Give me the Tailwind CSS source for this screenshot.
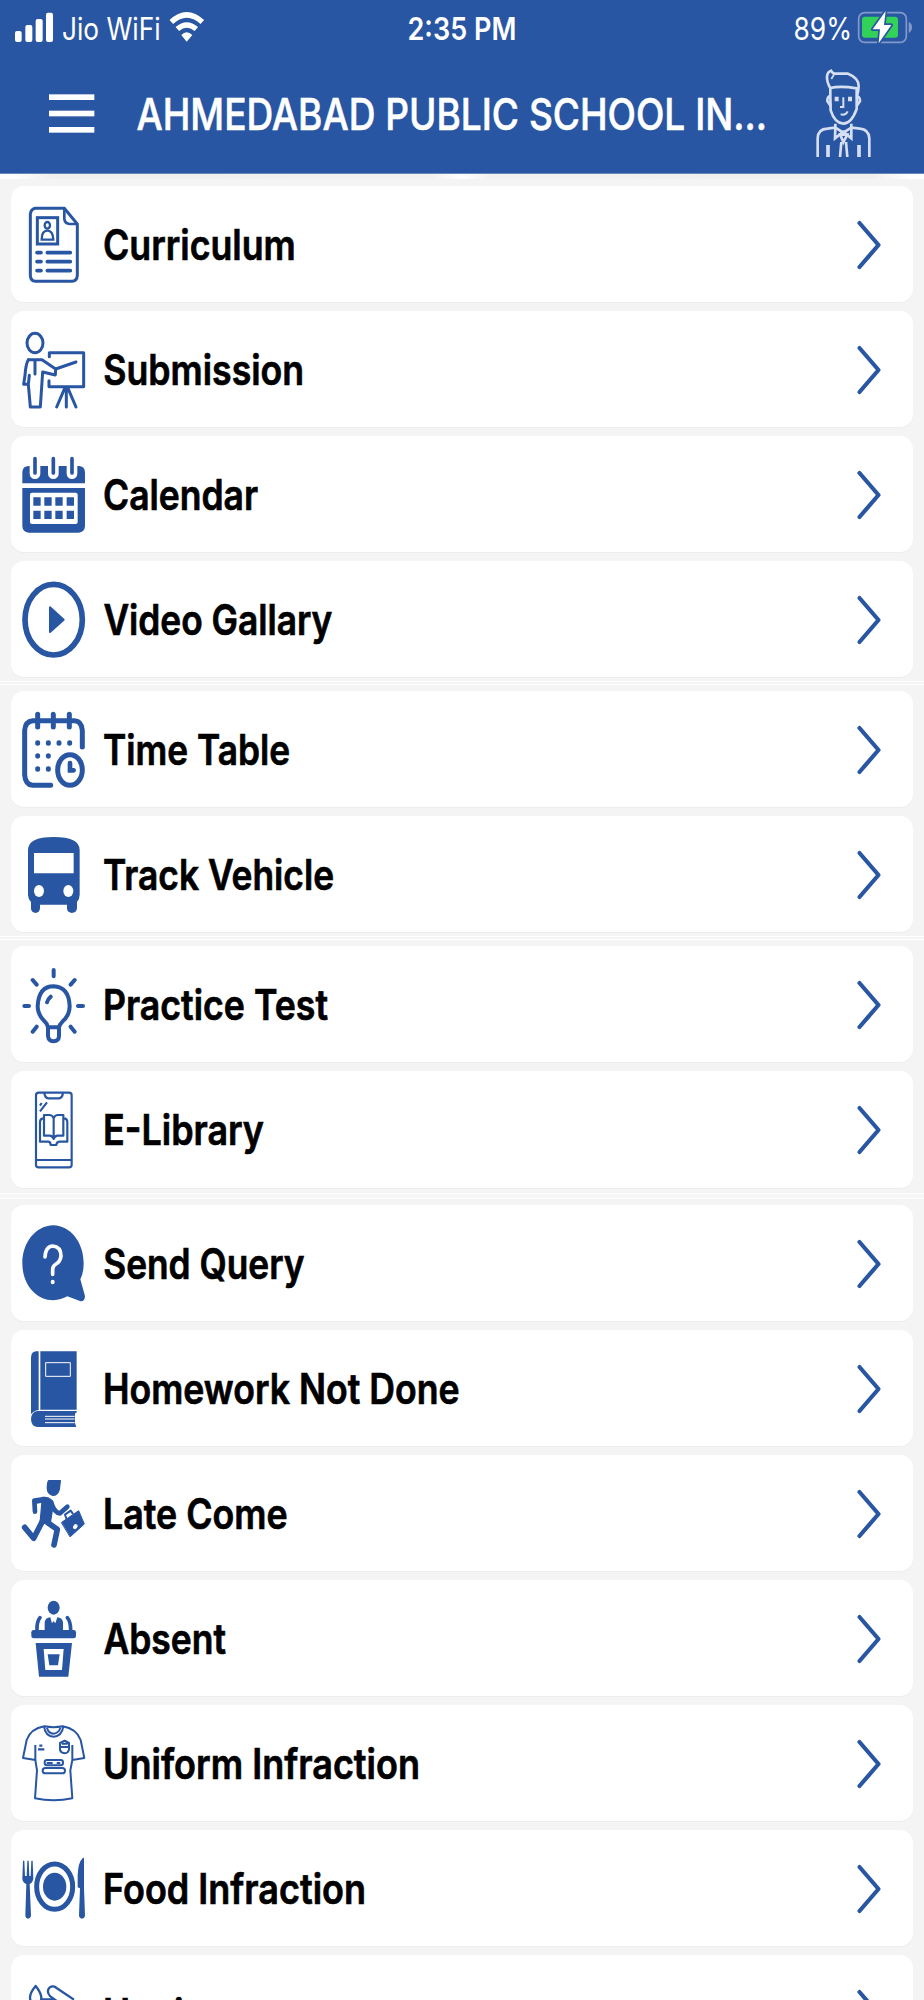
<!DOCTYPE html>
<html lang="en">
<head>
<meta charset="utf-8">
<title>Ahmedabad Public School</title>
<script src="https://cdn.jsdelivr.net/npm/@tailwindcss/browser@4"></script>
</head>
<body class="bg-[#f4f4f4]">
<div class="w-[924px] h-[2000px] overflow-hidden bg-[#f4f4f4] font-['Inter','Liberation_Sans',sans-serif] text-black">

<header class="h-[174px] bg-[#2956a3] text-white border-b border-[#6b87b5]">
  <div class="h-[58px] flex items-start">
    <svg class="ml-[14px] mt-[12px] w-[40px] h-[30px] shrink-0" viewBox="42 36 120 90" fill="#fff">
      <rect x="45" y="93" width="20" height="33" rx="6"/><rect x="76" y="75" width="21" height="51" rx="6"/><rect x="107" y="57" width="21" height="69" rx="6"/><rect x="138" y="38" width="21" height="88" rx="6"/>
    </svg>
    <svg class="overflow-visible ml-[6px] mt-[9px] w-[104px] h-[40px] shrink-0 text-[31px]" fill="currentColor"><text x="2" y="31" textLength="98.500" lengthAdjust="spacingAndGlyphs">Jio WiFi</text></svg>
    <svg class="ml-[5px] mt-[11px] w-[36px] h-[32px] shrink-0" viewBox="507 33 108 96" fill="none" stroke="#fff">
      <path d="M514 66Q560 23 607 66" stroke-width="16"/><path d="M532 87Q560 63 589 87" stroke-width="16"/><path d="M560 125L544 105Q560 89 577 105Z" fill="#fff" stroke="none"/>
    </svg>
    <svg class="overflow-visible ml-[201px] mt-[9px] w-[114px] h-[40px] shrink-0 text-[31px] font-semibold" fill="currentColor"><text x="1.500" y="31" textLength="109" lengthAdjust="spacingAndGlyphs">2:35 PM</text></svg>
    <svg class="overflow-visible ml-[271px] mt-[9px] w-[62px] h-[40px] shrink-0 text-[31px]" fill="currentColor"><text x="2.500" y="31" textLength="58.500" lengthAdjust="spacingAndGlyphs">89%</text></svg>
    <svg class="ml-[4px] mt-[10px] w-[56px] h-[34px] shrink-0" viewBox="1185 30 168 102">
      <rect x="1190" y="38" width="143" height="89" rx="18" fill="none" stroke="#8299c9" stroke-width="5"/>
      <path d="M1340 66Q1350 70 1350 82Q1350 94 1340 99Z" fill="#8299c9"/>
      <rect x="1200" y="50" width="108" height="63" rx="9" fill="#32d158"/>
      <path d="M1271 33L1232 88H1254L1250 130L1288 75H1266Z" fill="#fff" stroke="#2956a3" stroke-width="10" stroke-linejoin="round" paint-order="stroke"/>
    </svg>
  </div>
  <div class="h-[115px] flex items-start">
    <svg class="ml-[47px] mt-[34px] w-[50px] h-[43px] shrink-0" viewBox="141 276 150 129" fill="#fff">
      <rect x="147" y="283" width="136" height="17"/><rect x="147" y="332" width="136" height="17"/><rect x="147" y="381" width="136" height="17"/>
    </svg>
    <svg class="overflow-visible ml-[38px] mt-[30px] w-[640px] h-[54px] shrink-0 text-[44px] font-medium" fill="currentColor"><text x="1.500" y="42.400" textLength="630.500" lengthAdjust="spacingAndGlyphs" stroke="currentColor" stroke-width=".6">AHMEDABAD PUBLIC SCHOOL IN...</text></svg>
    <svg class="ml-[37px] mt-[9px] w-[60px] h-[92px] shrink-0" viewBox="1050 200 180 276" fill="none" stroke="#d5def2" stroke-width="8">
      <path d="M1105 263Q1094 245 1095 228Q1097 214 1107 211Q1111 218 1117 220H1158Q1191 233 1190 258Q1189 274 1185 286"/>
      <path d="M1117 221L1108 236" stroke-width="5"/>
      <path d="M1105 287V263Q1135 256 1184 264V326Q1168 370 1144 370Q1118 368 1106 330Z"/>
      <path d="M1105 287Q1096 288 1096 302L1106 317M1185 287Q1194 290 1194 302L1184 317"/>
      <path d="M1118 296H1130M1158 296H1170" stroke-width="14"/>
      <path d="M1144 291V320H1134M1136 342Q1151 346 1157 333" stroke-width="6"/>
      <path d="M1067 470V414Q1068 386 1096 385L1120 382V370M1222 470V414Q1220 387 1194 385L1168 382V370M1120 382L1119 414L1144 394L1168 414V382"/>
      <path d="M1135 403L1144 426L1156 403ZM1120 382L1144 397L1168 382"/>
      <path d="M1138 425L1134 470M1152 425L1156 470"/>
      <path d="M1098 434V470M1191 434V470" stroke-width="11"/>
    </svg>
  </div>
</header>
<div class="h-[5px] flex">
  <i class="block grow h-full bg-linear-to-r from-white from-3% via-[#efefef] via-12% to-[#f1f1f1]"></i>
  <i class="block w-[60px] h-full bg-linear-to-r from-[#f1f1f1] via-white to-[#f1f1f1]"></i>
  <i class="block grow h-full bg-linear-to-l from-white from-3% via-[#efefef] via-12% to-[#f1f1f1]"></i>
</div>

<main id="menu" class="pt-[6.5px] flex flex-col text-[#2956a3]"></main>
</div>

<script>
// Menu entries: label, text x, text width, icon viewBox top, row pitch, icon drawing
const rows = [
['Curriculum',3,192.8,74,125,`<g fill="none" stroke="currentColor" stroke-width="9"><path d="M106 84H193L232 131V285Q231 302 216 303H106Q92 302 91 285V101Q93 86 106 84Z"/><path d="M193 84V116Q195 130 209 131H232" stroke-width="8"/><rect x="112" y="112" width="61" height="79"/><ellipse cx="142" cy="135" rx="8" ry="10" stroke-width="7"/><path d="M125 178Q125 151 142 151Q159 151 160 178Z" stroke-width="7"/><path stroke-width="11" stroke-linecap="round" d="M111 217H123M142 217H211M111 244H123M142 244H211M111 271H123M142 271H211"/></g>`],
['Submission',3.2,201,449,125,`<g fill="none" stroke="currentColor" stroke-width="9" stroke-linecap="round" stroke-linejoin="round"><ellipse cx="105" cy="488" rx="24" ry="29"/><path d="M148 529V517H251V619H147V601"/><path d="M85 538H126L167 566L228 545M167 566L166 584L128 575L121 680H91L85 612H71L75 585Q77 553 85 538M105 541V581M88 585L85 612"/><path d="M199 622V680M194 624L170 680M204 624L228 680"/></g>`],
['Calendar',3,155,824,125,`<path fill="currentColor" d="M67 909V876Q68 857 86 857H236Q254 857 255 876V909ZM67 923H255V1038Q254 1056 236 1057H86Q68 1056 67 1038Z"/><g fill="none" stroke-linecap="round"><path stroke="#fff" stroke-width="32" d="M105 850V880M160 850V880M216 850V880"/><path stroke="currentColor" stroke-width="11" d="M105 835V878M160 835V878M216 835V878"/></g><rect x="90" y="937" width="143" height="94" rx="6" fill="#fff"/><path fill="currentColor" d="M100 951h22v25h-22zM133 951h22v25h-22zM166 951h22v25h-22zM200 951h22v25h-22zM100 991h22v25h-22zM133 991h22v25h-22zM166 991h22v25h-22zM200 991h22v25h-22z"/>`],
['Video Gallary',3.4,229,59,130.3,`<ellipse cx="161" cy="178" rx="86" ry="106" fill="none" stroke="currentColor" stroke-width="17"/><path d="M150 141V215L191 178Z" fill="currentColor" stroke="currentColor" stroke-width="6" stroke-linejoin="round"/>`],
['Time Table',3,187,450,125,`<g fill="none" stroke="currentColor" stroke-width="15" stroke-linecap="round"><path d="M247 561V511Q245 483 224 482H98Q76 484 74 511V645Q76 674 98 676H152"/><path d="M113 463V501M160 463V501M208 463V501"/><ellipse cx="210" cy="630" rx="37" ry="46"/><path d="M210 609V631H221" stroke-width="14"/><path d="M113 548v2M145 548v2M177 548v2M209 548v2M113 587v2M145 587v2M113 626v2M145 626v2"/></g>`],
['Track Vehicle',3,231.1,825,130,`<path fill="currentColor" d="M84 870Q84 831 161 831Q239 831 239 870V1005Q239 1016 231 1026V1045Q230 1059 215 1059Q201 1057 201 1045V1034H120V1045Q119 1059 106 1059Q93 1057 93 1045V1026Q84 1016 84 1005Z"/><path fill="#fff" d="M102 879H221V940H102Z"/><ellipse cx="117" cy="993" rx="15" ry="18" fill="#fff"/><ellipse cx="205" cy="993" rx="15" ry="18" fill="#fff"/>`],
['Practice Test',3,225,75,125.7,`<g fill="none" stroke="currentColor" stroke-width="12" stroke-linecap="round" stroke-linejoin="round"><path d="M144 262Q142 251 133 243Q113 224 113 199Q116 139 161 139Q207 141 209 199Q208 227 188 244Q178 254 177 262V288Q177 304 160 304Q145 304 144 288ZM144 262H177"/><path stroke-width="12" d="M141 187Q143 178 152 170M161 90V109M98 120L110 134M224 120L212 134M73 198H87M234 198H249M98 275L110 260M224 275L212 260"/></g>`],
['E-Library',3,161,451,133.300,`<g fill="none" stroke="currentColor" stroke-width="6.500" stroke-linejoin="round"><rect x="108" y="459" width="107" height="224" rx="8"/><path d="M108 661H215M133 460Q135 475 145 476H177Q187 475 189 460"/><path d="M120 515L141 488M120 498L125 490"/><path d="M161 535Q157 526 148 526H132V588H150Q159 590 161 598Q163 590 172 588H190V526H174Q165 526 161 535V598M131 536Q120 536 120 548V606H145Q152 607 152 616H169Q170 607 178 606H202V548Q202 536 191 536"/></g>`],
['Send Query',3.2,201.3,852,125,`<path fill="currentColor" d="M160 856C213 858 251 908 251 970Q251 998 241 1018L255 1068Q255 1084 242 1084L202 1069Q183 1080 160 1081C107 1080 67 1032 67 970C67 908 107 857 160 856Z"/><path d="M135 951Q137 919 158 918Q183 920 183 948Q181 965 168 972Q158 978 158 989V1003" fill="none" stroke="#fff" stroke-width="11" stroke-linecap="round"/><ellipse cx="158" cy="1026" rx="6" ry="7" fill="#fff"/>`],
['Homework Not Done',3,356.5,87,125,`<path fill="currentColor" d="M93 113Q94 94 109 94H116V270Q100 272 93 283ZM121 94H230V269H121ZM112 273H230V277L225 281V309L229 321H112Q93 318 93 297Q94 276 112 273Z"/><path fill="none" stroke="#fff" stroke-width="3" d="M137 128H211V169H137ZM135 289H224M135 297H224M135 308H224"/>`],
['Late Come',3,184.6,462,125,`<g fill="none" stroke="currentColor" stroke-linecap="round" stroke-linejoin="round"><path fill="currentColor" stroke-width="4" d="M146 482H181L178 507Q174 526 158 526Q142 522 142 505Q142 487 146 482Z"/><path fill="currentColor" stroke-width="4" d="M128 532L145 534Q156 539 160 551L151 608L120 612L126 546L106 550Z"/><path stroke-width="14" d="M135 537L103 542L105 575M153 546Q163 579 180 580L202 560"/><path stroke-width="17" d="M126 606L101 655L74 622M143 608L172 628L162 675"/><path fill="currentColor" stroke-width="3" stroke-linejoin="miter" d="M185 607L236 572L253 612L211 650Z"/><path stroke-width="6" d="M199 595L195 584L212 572L218 580"/></g><ellipse cx="226" cy="620" rx="6" ry="8" fill="#fff" transform="rotate(35 226 620)"/>`],
['Absent',3.4,122.6,837,125,`<g fill="currentColor"><ellipse cx="161" cy="863" rx="18" ry="21"/><rect x="94" y="930" width="134" height="25" rx="7"/><path d="M134 931V906Q137 893 151 892L156 910L161 903L166 910L172 892Q186 893 189 906V931ZM107 969H216L205 1070H117Z"/></g><path fill="none" stroke="currentColor" stroke-width="11" stroke-linecap="round" d="M111 930Q110 905 120 893M212 930Q212 905 202 893"/><path fill="#fff" d="M131 987H191L186 1050H136Z"/><path fill="currentColor" d="M143 1003H179L174 1036H148Z"/>`],
['Uniform Infraction',3,317,72,125.4,`<g fill="none" stroke="currentColor" stroke-width="6" stroke-linejoin="round"><path d="M106 135V180L69 174L80 120Q92 86 133 79Q161 84 188 79Q229 86 242 120L253 174L217 180V135M106 180L111 211L105 295Q161 307 217 295L211 211L217 180"/><path d="M132 79Q136 109 161 110Q186 108 190 79M141 83Q145 100 161 101Q178 99 181 83"/><rect x="134" y="180" width="55" height="16" rx="7"/><rect x="128" y="204" width="67" height="16" rx="8"/><path d="M140 189H158M170 189H181"/><path stroke-width="7" d="M118 137H127M114 148H133"/><path d="M180 129L194 122L207 129V149Q205 159 194 160Q182 158 180 149ZM180 141H207M185 131H203"/></g>`],
['Food Infraction',3,263,449,124.7,`<ellipse cx="164" cy="562" rx="54" ry="68" fill="none" stroke="currentColor" stroke-width="15"/><ellipse cx="164" cy="562" rx="35" ry="42" fill="currentColor"/><path fill="currentColor" d="M69 484H73L75 530H80L82 484H86L88 530H92L94 484H98L100 538Q98 550 89 554L93 648Q92 658 84 658Q76 657 76 648L79 554Q68 550 67 538ZM249 475H252V565L255 648Q254 658 246 658Q237 657 237 648L240 567L233 564V528Q234 489 249 475Z"/>`],
['Hygiene',3,146,822,125,`<g fill="none" stroke="currentColor" stroke-width="7" stroke-linejoin="round"><path d="M107 858Q90 878 90 893Q91 912 107 913Q124 911 124 893Q123 878 107 858ZM222 899L164 860Q151 856 145 868Q141 880 151 889L188 916M124 898H160"/></g>`]
];
const line = p => p < 130 ? '' : p > 133 ? `<i class="block w-full h-[6px] border-y border-white bg-[#f7f7f7]"></i>` : `<i class="block w-full h-[4px] mb-[2px] border-y border-white"></i>`;
document.getElementById('menu').innerHTML = rows.map(([t,x,w,y,p,icon]) => `
<section class="shrink-0 flex flex-col" style="height:${p}px">
  <div class="shrink-0 mx-[11.33px] h-[116.3px] rounded-[13px] bg-white flex items-start shadow-[0_1px_1px_rgba(0,0,0,0.03)]">
    <svg class="ml-[8.67px] mt-[19px] w-[66.67px] h-[80px] shrink-0" viewBox="60 ${y} 200 240">${icon}</svg>
    <svg class="overflow-visible ml-[13.33px] mt-[30px] grow h-[60px] text-[42px] font-semibold text-black" fill="currentColor" stroke="currentColor" stroke-width=".7"><text x="${x}" y="44" textLength="${w}" lengthAdjust="spacingAndGlyphs">${t}</text></svg>
    <svg class="mr-[30.500px] mt-[33px] w-[26px] h-[52px] shrink-0" viewBox="0 0 26 52" fill="none" stroke="currentColor" stroke-width="4.200" stroke-linecap="round" stroke-linejoin="round"><path d="M3.500 4L22.500 26L3.500 48"/></svg>
  </div>
  <div class="grow flex items-center">${line(p)}</div>
</section>`).join('');
</script>
</body>
</html>
